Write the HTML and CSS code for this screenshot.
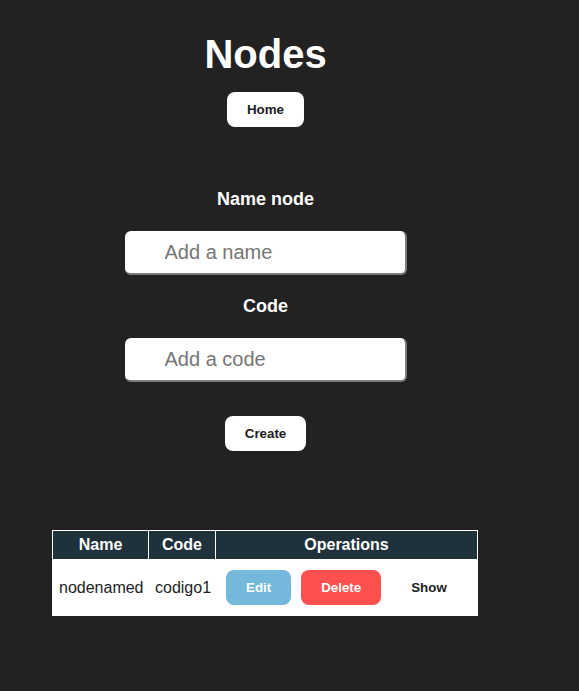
FILE: index.html
```html
<!DOCTYPE html>
<html>
<head>
<meta charset="utf-8">
<link rel="stylesheet" href="styles.css">
</head>
<body>
<div class="page">
  <h1 class="title">Nodes</h1>
  <button class="btn">Home</button>
  <form class="form">
    <label class="label">Name node</label>
    <input class="field" type="text" placeholder="Add a name">
    <label class="label label-code">Code</label>
    <input class="field" type="text" placeholder="Add a code">
    <button class="btn btn-create" type="button">Create</button>
  </form>
  <table class="nodes">
    <thead>
      <tr>
        <th class="c-name">Name</th>
        <th class="c-code">Code</th>
        <th class="c-ops">Operations</th>
      </tr>
    </thead>
    <tbody>
      <tr>
        <td>nodenamed</td>
        <td>codigo1</td>
        <td class="ops">
          <button class="btn op edit">Edit</button>
          <button class="btn op delete">Delete</button>
          <button class="btn op show">Show</button>
        </td>
      </tr>
    </tbody>
  </table>
</div>
</body>
</html>
```
FILE: styles.css
```css
html, body {
  margin: 0;
  padding: 0;
  background: #222222;
  font-family: "Liberation Sans", Arial, sans-serif;
}
.page {
  width: 531px;
  display: flex;
  flex-direction: column;
  align-items: center;
  padding-top: 31px;
}
.title {
  margin: 0;
  font-size: 40px;
  line-height: 46px;
  font-weight: bold;
  color: #ffffff;
}
.btn {
  height: 35px;
  padding: 0 20px;
  border: none;
  border-radius: 8px;
  background: #ffffff;
  color: #1c1c24;
  font-family: "Liberation Sans", Arial, sans-serif;
  font-size: 13.333px;
  font-weight: bold;
  cursor: pointer;
}
.page > .btn {
  margin-top: 15px;
}
.form {
  display: flex;
  flex-direction: column;
  align-items: center;
  margin: 62px 0 0;
}
.label {
  display: block;
  color: #ffffff;
  font-size: 18px;
  line-height: 21px;
  font-weight: bold;
}
.label-code {
  margin-top: 21px;
}
.field {
  box-sizing: border-box;
  width: 282px;
  height: 44px;
  margin-top: 21px;
  padding: 0 0 0 40px;
  border: none;
  border-right: 2px solid #7c7c7c;
  border-bottom: 2px solid #7c7c7c;
  border-radius: 6px;
  background: #ffffff;
  font-family: "Liberation Sans", Arial, sans-serif;
  font-size: 20px;
  color: #222;
  outline: none;
}
.field::placeholder {
  color: #767676;
}
.btn-create {
  margin-top: 34px;
}
.nodes {
  margin: 79px 1px 0 0;
  width: 426px;
  table-layout: fixed;
  border-collapse: collapse;
  border: 1px solid #ffffff;
  background: #ffffff;
  font-size: 16px;
}
.nodes th {
  background: #1f313a;
  color: #ffffff;
  font-weight: bold;
  line-height: 18px;
  padding: 5px 6px;
  border: 1px solid #ffffff;
  text-align: center;
}
.nodes td {
  color: #1c1c24;
  padding: 10px 6px;
  line-height: 18px;
  text-align: center;
  border: 1px solid #ffffff;
  white-space: nowrap;
}
.c-name { width: 83px; }
.c-code { width: 54px; }
.nodes td.ops {
  padding: 10px 10px;
  text-align: left;
}
.ops {
  font-size: 0;
}
.op {
  margin-right: 10px;
  vertical-align: middle;
}
.op.show {
  margin: 0 0 0 4px;
  padding: 0 16px;
}
.edit {
  background: #74b9dc;
  color: #ffffff;
}
.delete {
  background: #ff5050;
  color: #ffffff;
}
.show {
  background: #ffffff;
}
```
